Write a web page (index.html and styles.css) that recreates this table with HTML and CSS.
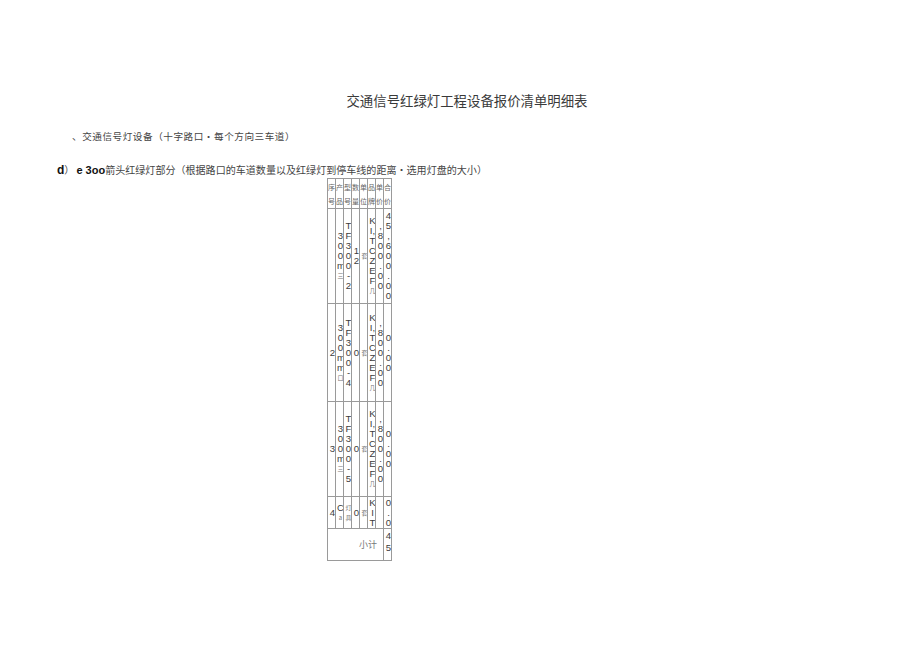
FILE: index.html
```html
<!DOCTYPE html>
<html lang="zh">
<head>
<meta charset="utf-8">
<title>交通信号红绿灯工程设备报价清单明细表</title>
<link rel="stylesheet" href="styles.css">
</head>
<body>
<div class="page">
  <h1 class="title">交通信号红绿灯工程设备报价清单明细表</h1>
  <p class="section">、交通信号灯设备（十字路口·每个方向三车道）</p>
  <p class="sub"><b class="d">d</b>）<b class="e">e 3oo</b>箭头红绿灯部分（根据路口的车道数量以及红绿灯到停车线的距离·选用灯盘的大小）</p>

  <div class="tbl">
    <div class="h">序号</div>
    <div class="h">产品</div>
    <div class="h">型号</div>
    <div class="h">数量</div>
    <div class="h">单位</div>
    <div class="h">品牌</div>
    <div class="h">单价</div>
    <div class="h">合价</div>

    <div class="c"><span class="s"></span></div>
    <div class="c"><span class="s">300m<i class="cj">三</i></span></div>
    <div class="c"><span class="s">TF300-2</span></div>
    <div class="c"><span class="s">12</span></div>
    <div class="c"><span class="s"><i class="cj">套</i></span></div>
    <div class="c"><span class="s">KI,TCZEF<i class="cj">几</i></span></div>
    <div class="c"><span class="s">,800.00</span></div>
    <div class="c"><span class="s">45,600.00</span></div>

    <div class="c"><span class="s">2</span></div>
    <div class="c"><span class="s">300mm<i class="cj">口</i></span></div>
    <div class="c"><span class="s">TF300-4</span></div>
    <div class="c"><span class="s">0</span></div>
    <div class="c"><span class="s"><i class="cj">套</i></span></div>
    <div class="c"><span class="s">KI,TCZEF<i class="cj">几</i></span></div>
    <div class="c"><span class="s">,800.00</span></div>
    <div class="c"><span class="s">0.00</span></div>

    <div class="c"><span class="s">3</span></div>
    <div class="c"><span class="s">300m<i class="cj">三</i></span></div>
    <div class="c"><span class="s">TF300-5</span></div>
    <div class="c"><span class="s">0</span></div>
    <div class="c"><span class="s"><i class="cj">套</i></span></div>
    <div class="c"><span class="s">KI,TCZEF<i class="cj">几</i></span></div>
    <div class="c"><span class="s">,800.00</span></div>
    <div class="c"><span class="s">0.00</span></div>

    <div class="c"><span class="s">4</span></div>
    <div class="c"><span class="s">C<i class="cj">a</i></span></div>
    <div class="c"><span class="s"><i class="cj">灯</i><i class="cj">具</i></span></div>
    <div class="c"><span class="s">0</span></div>
    <div class="c"><span class="s"><i class="cj">套</i></span></div>
    <div class="c"><span class="s">KIT</span></div>
    <div class="c"><span class="s"></span></div>
    <div class="c"><span class="s">0.0</span></div>

    <div class="total">小计</div>
    <div class="c top"><span class="s lh12">45</span></div>
  </div>
</div>
</body>
</html>
```

FILE: styles.css
```css
html, body {
  margin: 0;
  padding: 0;
  background: #ffffff;
}

body {
  font-family: "Liberation Sans", "Noto Sans CJK SC", sans-serif;
  color: #333333;
}

.page {
  width: 920px;
  height: 650px;
  padding-top: 91px;
  box-sizing: border-box;
}

.title {
  margin: 0;
  padding-left: 14px;
  text-align: center;
  font-family: "Noto Sans CJK SC", sans-serif;
  font-weight: normal;
  font-size: 13.4px;
  line-height: 18px;
  color: #3a3a3a;
}

.section {
  margin: 20px 0 0 72px;
  font-family: "Noto Sans CJK SC", sans-serif;
  font-size: 9.6px;
  line-height: 14px;
  letter-spacing: 0.55px;
  color: #444444;
}

.sub {
  margin: 20px 0 0 57px;
  font-family: "Noto Sans CJK SC", sans-serif;
  font-size: 10.05px;
  line-height: 14px;
  color: #444444;
}

.sub .d {
  font-family: "Liberation Sans", sans-serif;
  font-size: 12px;
  font-weight: bold;
  color: #111111;
}

.sub .e {
  font-family: "Liberation Sans", sans-serif;
  font-size: 11px;
  font-weight: bold;
  color: #111111;
  margin-left: 2px;
}

.tbl {
  margin: 1px 0 0 327px;
  display: grid;
  grid-template-columns: repeat(8, 7px);
  grid-template-rows: 29px 94px 97px 94px 31px 31px;
  gap: 1px;
  width: max-content;
  background: #9a9a9a;
  border: 1px solid #9a9a9a;
}

.h {
  background: #ffffff;
  font-family: "Noto Sans CJK SC", sans-serif;
  font-size: 7px;
  line-height: 14px;
  color: #666666;
  text-align: center;
  overflow: hidden;
  display: flex;
  flex-direction: column;
  justify-content: center;
  word-break: break-all;
}

.c {
  background: #ffffff;
  overflow: hidden;
  display: flex;
  flex-direction: column;
  justify-content: center;
}

.c.top {
  justify-content: flex-start;
}

.s {
  display: block;
  width: 7px;
  padding-left: 1px;
  font-family: "Liberation Sans", sans-serif;
  font-size: 9.6px;
  line-height: 10px;
  color: #3c3c3c;
  text-align: center;
  word-break: break-all;
  overflow-wrap: anywhere;
}

.s.lh12 {
  line-height: 12px;
  padding-top: 1px;
}

.cj {
  display: block;
  font-style: normal;
  font-family: "Noto Sans CJK SC", sans-serif;
  font-size: 6px;
  line-height: 10px;
  color: #777777;
}

.total {
  grid-column: span 7;
  background: #ffffff;
  display: flex;
  align-items: center;
  justify-content: flex-end;
  padding-right: 6px;
  font-family: "Noto Sans CJK SC", sans-serif;
  font-size: 9px;
  color: #777777;
}
```
